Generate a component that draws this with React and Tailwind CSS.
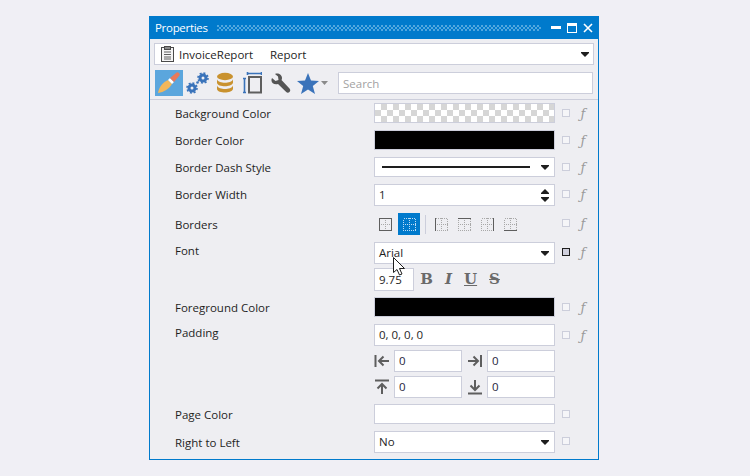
import React from 'react';

const Caret = () => (
  <svg width="8" height="5" viewBox="0 0 8 5" className="shrink-0">
    <path d="M0 0h8v1L4 5 0 1z" fill="#1e1e1e" />
  </svg>
);

const Flags = ({ fx = true, on = false }) => (
  <div className="flex items-center ml-[7px] h-[20px] self-start">
    <div className={on ? 'w-[8px] h-[8px] border border-[#1e1e1e] bg-[#cfcfdc]' : 'w-[8px] h-[8px] border border-[#cccedb] bg-[#f5f5f8]'} />
    {fx && <span className="ml-[7px] w-[12px] text-center text-[#9a9a9a] text-[13px] italic leading-none font-['DejaVu_Serif',serif]">ƒ</span>}
  </div>
);

const Row = ({ label, top, children, fx, on, flagTop = '', labelTop = 'pt-px' }) => (
  <div className="flex items-start" style={{ marginTop: top }}>
    <div className={`w-[224px] h-[20px] pl-[25px] text-[11.5px] leading-[20px] text-[#1e1e1e] shrink-0 ${labelTop}`}>{label}</div>
    <div className="w-[181px] shrink-0">{children}</div>
    <div className={flagTop}><Flags fx={fx} on={on} /></div>
  </div>
);

const Box = ({ children, className = '' }) => (
  <div className={`bg-white border border-[#cccedb] flex items-center pl-[4px] pr-[5px] text-[11.5px] text-[#1e1e1e] ${className}`}>{children}</div>
);

const Gears = () => (
  <svg width="24" height="24" viewBox="0 0 24 24">
    <g fill="none" stroke="#3a73ba">
      <circle cx="6" cy="17" r="3" strokeWidth="3" />
      <circle cx="6" cy="17" r="5" strokeWidth="1.6" strokeDasharray="2 1.9" />
      <circle cx="17" cy="7" r="3" strokeWidth="3" />
      <circle cx="17" cy="7" r="5" strokeWidth="1.6" strokeDasharray="2 1.9" />
    </g>
    <circle cx="11.5" cy="11.5" r="1.3" fill="#3a73ba" />
  </svg>
);

const Db = () => (
  <svg width="18" height="22" viewBox="0 0 18 22">
    <ellipse cx="9" cy="4.5" rx="8" ry="3.7" fill="#c9922f" />
    <path d="M1 7.200c1 2.600 4.500 3.500 8 3.500s7-.9 8-3.500v3.600c-1 2.600-4.500 3.500-8 3.500s-8-1-8-3.500z" fill="#c9922f" />
    <path d="M1 13.400c1 2.600 4.500 3.500 8 3.500s7-.9 8-3.500v3.600c-1 2.600-4.500 3.500-8 3.500s-8-1-8-3.500z" fill="#c9922f" />
  </svg>
);

const Layout = () => (
  <svg width="19" height="22" viewBox="0 0 19 22" fill="none">
    <rect x="6" y="5" width="12" height="15.500" stroke="#5e5e5e" strokeWidth="2" />
    <path d="M1.500 6v15M0 6.500h3M0 20.500h3" stroke="#3a73ba" strokeWidth="1.600" />
    <path d="M4 1.500h15M4.500 0v3M18.500 0v3" stroke="#3a73ba" strokeWidth="1.600" />
  </svg>
);

const BorderIcon = ({ top, left, right, bottom, all, white }) => {
  const dot = white ? '#bcdcf5' : '#a8a8a8';
  const line = white ? '#fff' : '#5e5e5e';
  return (
    <svg width="13" height="13" viewBox="0 0 13 13" fill="none" shapeRendering="crispEdges">
      <rect x=".5" y=".5" width="12" height="12" stroke={dot} strokeDasharray="1 1" />
      <path d="M6.500 0v13M0 6.500h13" stroke={dot} strokeDasharray="1 1" />
      {(top || all) && <path d="M0 .5h13" stroke={line} />}
      {(bottom || all) && <path d="M0 12.500h13" stroke={line} />}
      {(left || all) && <path d="M.5 0v13" stroke={line} />}
      {(right || all) && <path d="M12.500 0v13" stroke={line} />}
    </svg>
  );
};

const Arrow = ({ d }) => (
  <svg width="16" height="16" viewBox="0 0 16 16" fill="none" stroke="#5e5e5e" strokeWidth="2">
    <path d={d} />
  </svg>
);

const PadField = ({ icon, value }) => (
  <div className="flex items-center">
    <div className="w-[20px] flex justify-start">{icon}</div>
    <Box className="w-[68px] h-[22px] !text-[#1e1e3c]">{value}</Box>
  </div>
);

export default function App() {
  return (
    <div className="relative w-[750px] h-[476px] bg-[#f0eff5] pl-[149px] pt-[16px] font-['Open_Sans',sans-serif] overflow-hidden">
      <div className="w-[450px] h-[444px] border border-[#007acc] bg-[#eeeef2]">
        <div className="h-[23px] -mt-px -mx-px bg-[#007acc] flex items-center pl-[6px] pr-[6px] text-white">
          <span className="text-[11.5px] font-medium tracking-[-0.3px]">Properties</span>
          <div className="flex-1 h-[6px] ml-[9px] mr-[10px] bg-[radial-gradient(circle_at_1px_1px,#7fc0ea_0.6px,transparent_0.9px),radial-gradient(circle_at_3px_3px,#7fc0ea_0.6px,transparent_0.9px)] bg-[length:4px_4px]" />
          <div className="flex items-center gap-[6px]">
            <div className="w-[10px] h-[2.500px] bg-white" />
            <div className="w-[10px] h-[10px] border border-white border-t-[3px]" />
            <svg width="10" height="10" viewBox="0 0 10 10"><path d="M1 1l8 8M9 1l-8 8" stroke="#fff" strokeWidth="1.600" /></svg>
          </div>
        </div>

        <div className="mx-[4px] mt-[4px] h-[22px] bg-white border border-[#cccedb] flex items-center pl-[6px] pr-[4px] text-[11.5px] text-[#1e1e1e]">
          <svg width="13" height="16" viewBox="0 0 13 16" fill="none" className="shrink-0">
            <rect x=".5" y="1.500" width="12" height="14" stroke="#4a4a4a" fill="#f4f4f4" />
            <rect x="3.500" y=".5" width="6" height="3" fill="#8a8a8a" stroke="#4a4a4a" />
            <path d="M3 6h7M3 8.500h7M3 11h7M3 13h7" stroke="#5e5e5e" />
          </svg>
          <span className="ml-[5px] w-[91px] pt-px">InvoiceReport</span>
          <span className="flex-1 pt-px">Report</span>
          <Caret />
        </div>

        <div className="flex items-center mt-[5px] ml-[5px] h-[26px]">
          <div className="w-[28px] h-[26px] bg-[#5ba6dd] flex items-center justify-center">
            <svg width="24" height="22" viewBox="0 0 24 22">
              <path d="M1 21c1-6 5-11 10-13l4 4c-3 5-8 8-14 9z" fill="#f2b75a" />
              <path d="M11 8l4 4 2-2-4-4z" fill="#fff" />
              <path d="M13 6l4 4 5-6c1-1 1-2 0-3s-2-1-3 0z" fill="#e8795a" />
            </svg>
          </div>
          <div className="ml-[3px] w-[24px]"><Gears /></div>
          <div className="ml-[6px] w-[18px]"><Db /></div>
          <div className="ml-[9px] w-[19px]"><Layout /></div>
          <div className="ml-[8px]">
            <svg width="21" height="21" viewBox="0 0 21 21">
              <path d="M2 5l3.500 3 3-1-.5-3.500L5 1c3-1.500 7 .5 7 4 0 1-.2 1.500-.5 2l8 8.500c1 1.200 1 2.500 0 3.500s-2.300 1-3.300 0l-8.200-8c-3.500 1.200-7-1-6.500-4.500z" fill="#555" />
            </svg>
          </div>
          <div className="ml-[6px] flex items-center">
            <svg width="22" height="21" viewBox="0 0 22 21"><path d="M11 0l3 7.500 8 .5-6.200 5 2.200 8-7-4.500L4 21l2.200-8L0 8l8-.5z" fill="#3a73ba" /></svg>
            <svg width="7" height="4" viewBox="0 0 7 4" className="ml-[2px]"><path d="M0 0h7L3.500 4z" fill="#8a8a8a" /></svg>
          </div>
          <div className="ml-[10px] w-[255px] h-[22px] bg-white border border-[#cccedb] flex items-center pl-[4px] pt-px text-[11.5px] text-[#a2a2a2]">Search</div>
        </div>

        <div className="h-px bg-[#cccedb] mt-[3px]" />

        <Row label="Background Color" top="3px">
          <div className="h-[20px] border border-[#cccedb] bg-[repeating-conic-gradient(#d6d6d6_0_25%,#fff_0_50%)] bg-[length:12px_12px]" />
        </Row>
        <Row label="Border Color" top="7px">
          <div className="h-[20px] bg-black border border-[#cccedb]" />
        </Row>
        <Row label="Border Dash Style" top="7px">
          <Box className="h-[20px] !pl-[7px]">
            <div className="flex-1 h-[2px] bg-[#1e1e1e] mr-[11px]" />
            <Caret />
          </Box>
        </Row>
        <Row label="Border Width" top="7px">
          <Box className="h-[22px]">
            <span className="flex-1">1</span>
            <div className="flex flex-col gap-[3px]">
              <svg width="8" height="5" viewBox="0 0 8 5"><path d="M0 5h8V4L4 0 0 4z" fill="#1e1e1e" /></svg>
              <Caret />
            </div>
          </Box>
        </Row>
        <Row label="Borders" top="7px" labelTop="pt-[2px]">
          <div className="flex items-center h-[22px]">
            <div className="ml-[5px] w-[13px]"><BorderIcon all /></div>
            <div className="ml-[6px] w-[22px] h-[22px] bg-[#007acc] flex items-center justify-center"><BorderIcon white /></div>
            <div className="ml-[5px] w-px h-[19px] bg-[#cccedb]" />
            <div className="ml-[9px]"><BorderIcon left /></div>
            <div className="ml-[10px]"><BorderIcon top /></div>
            <div className="ml-[10px]"><BorderIcon right /></div>
            <div className="ml-[10px]"><BorderIcon bottom /></div>
          </div>
        </Row>
        <Row label="Font" top="7px" on labelTop="-mt-px">
          <Box className="h-[22px]">
            <span className="flex-1">Arial</span>
            <Caret />
          </Box>
          <div className="flex items-center mt-[4px] h-[23px]">
            <Box className="w-[40px] h-[23px]">9.75</Box>
            <div className="flex items-center ml-[6px] text-[#6a6a6a] text-[15px] font-bold font-['DejaVu_Serif',serif]">
              <span className="w-[13px] text-center">B</span>
              <span className="ml-[9px] w-[13px] text-center italic">I</span>
              <span className="ml-[9px] w-[13px] text-center underline">U</span>
              <span className="ml-[11px] w-[13px] text-center line-through">S</span>
            </div>
          </div>
        </Row>
        <Row label="Foreground Color" top="6px">
          <div className="h-[20px] bg-black border border-[#cccedb]" />
        </Row>
        <Row label="Padding" top="7px" flagTop="mt-[1px]" labelTop="-mt-px">
          <Box className="h-[22px]">0, 0, 0, 0</Box>
          <div className="grid grid-cols-[88px_93px] mt-[4px] gap-y-[4px] justify-between">
            <PadField value="0" icon={<Arrow d="M1.500 2v12M15 8H5M9.500 3.500L5 8l4.500 4.500" />} />
            <div className="pl-[5px]"><PadField value="0" icon={<Arrow d="M14 2v12M1 8h10M6.500 3.500L11 8l-4.500 4.500" />} /></div>
            <PadField value="0" icon={<Arrow d="M1 1.500h14M8 15V5M3.500 9.500L8 5l4.500 4.500" />} />
            <div className="pl-[5px]"><PadField value="0" icon={<Arrow d="M1 14.500h14M8 1v10M3.500 6.500L8 11l4.500-4.500" />} /></div>
          </div>
        </Row>
        <Row label="Page Color" top="6px" fx={false}>
          <div className="h-[20px] bg-white border border-[#cccedb]" />
        </Row>
        <Row label="Right to Left" top="7px" fx={false} labelTop="pt-[2px]">
          <Box className="h-[22px]">
            <span className="flex-1">No</span>
            <Caret />
          </Box>
        </Row>
      </div>

      {/* mouse pointer sitting over the font box */}
      <svg width="13" height="19" viewBox="0 0 13 19" className="absolute left-[393px] top-[257px]">
        <path d="M.5.500v15l3.500-3 2.500 5.500 2.500-1-2.500-5.500h5z" fill="#fff" stroke="#1e1e1e" />
      </svg>
    </div>
  );
}
